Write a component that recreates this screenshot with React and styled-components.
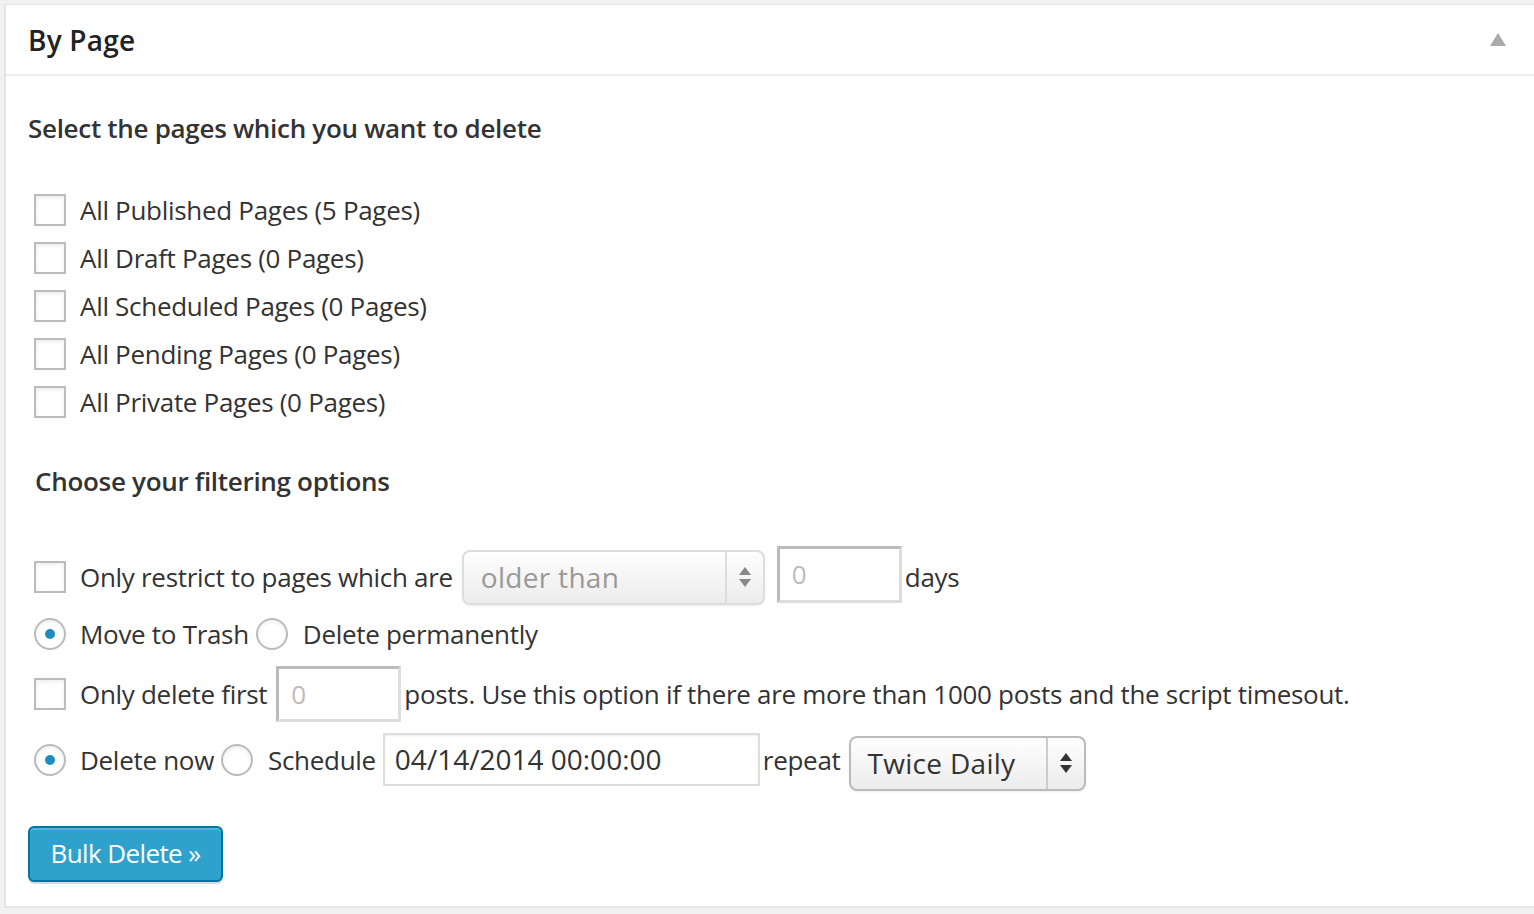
import React from "react";
import styled, { createGlobalStyle } from "styled-components";

const GlobalStyle = createGlobalStyle`
  html, body {
    margin: 0;
    padding: 0;
    background: #f1f1f1;
    font-family: "Open Sans", "Noto Sans", sans-serif;
    color: #444;
  }
  body {
    overflow: hidden;
  }
`;

const pageTypes = [
  "All Published Pages (5 Pages)",
  "All Draft Pages (0 Pages)",
  "All Scheduled Pages (0 Pages)",
  "All Pending Pages (0 Pages)",
  "All Private Pages (0 Pages)",
];

export default function App() {
  return (
    <>
      <GlobalStyle />
      <Panel>
        <PanelHeader>
          <Title>By Page</Title>
          <Toggle />
        </PanelHeader>
        <PanelBody>
          <Heading>Select the pages which you want to delete</Heading>
          <CheckList>
            {pageTypes.map((label) => (
              <CheckRow key={label}>
                <Checkbox />
                <Label>{label}</Label>
              </CheckRow>
            ))}
          </CheckList>

          <SubHeading>Choose your filtering options</SubHeading>

          <FilterRow $h={62}>
            <Checkbox />
            <Label>Only restrict to pages which are</Label>
            <Select $disabled $w={303} $hgt={55}>
              <span>older than</span>
              <Arrows $disabled />
            </Select>
            <NumberInput $w={125} $hgt={57} $mt={-6} $ml={12}>
              0
            </NumberInput>
            <Label $tight>days</Label>
          </FilterRow>

          <FilterRow $h={52}>
            <Radio $checked />
            <Label>Move to Trash</Label>
            <Radio />
            <Label>Delete permanently</Label>
          </FilterRow>

          <FilterRow $h={68}>
            <Checkbox />
            <Label>Only delete first</Label>
            <NumberInput $w={125} $hgt={56} $ml={9}>
              0
            </NumberInput>
            <Label $tight>
              posts. Use this option if there are more than 1000 posts and the
              script timesout.
            </Label>
          </FilterRow>

          <FilterRow $h={64}>
            <Radio $checked />
            <Label>Delete now</Label>
            <Radio />
            <Label>Schedule</Label>
            <DateInput>04/14/2014 00:00:00</DateInput>
            <Label $tight>repeat</Label>
            <Select $w={237} $hgt={55} $mt={6} $ml={8}>
              <span>Twice Daily</span>
              <Arrows />
            </Select>
          </FilterRow>

          <Button>Bulk Delete »</Button>
        </PanelBody>
      </Panel>
    </>
  );
}

const Panel = styled.section`
  margin: 4px 0 0 4px;
  width: 1540px;
  height: 904px;
  box-sizing: border-box;
  background: #fff;
  border: 2px solid #e5e5e5;
  border-top-width: 1px;
`;

const PanelHeader = styled.header`
  height: 69px;
  display: flex;
  align-items: center;
  justify-content: space-between;
  padding: 0 36px 0 22px;
  border-bottom: 2px solid #eee;
`;

const Title = styled.h2`
  margin: 0;
  font-size: 28px;
  font-weight: 600;
  color: #222;
  letter-spacing: 0.2px;
`;

const Toggle = styled.span`
  width: 0;
  height: 0;
  border-left: 8px solid transparent;
  border-right: 8px solid transparent;
  border-bottom: 13px solid #aaa;
`;

const PanelBody = styled.div`
  padding: 32px 0 0 22px;
  display: flex;
  flex-direction: column;
  align-items: flex-start;
`;

const Heading = styled.h3`
  margin: 0;
  line-height: 40px;
  font-size: 26px;
  font-weight: 600;
  color: #333;
  letter-spacing: -0.3px;
`;

const SubHeading = styled(Heading)`
  margin: 35px 0 0 7px;
`;

const CheckList = styled.div`
  margin-top: 38px;
  display: flex;
  flex-direction: column;
`;

const CheckRow = styled.div`
  height: 48px;
  display: flex;
  align-items: center;
  padding-left: 6px;
`;

const FilterRow = styled.div`
  height: ${(p) => p.$h}px;
  display: flex;
  align-items: center;
  padding-left: 6px;
  ${SubHeading} + & {
    margin-top: 45px;
  }
`;

const Checkbox = styled.span`
  flex: none;
  width: 32px;
  height: 32px;
  box-sizing: border-box;
  border: 2px solid #bbb;
  background: #fff;
  box-shadow: inset 0 2px 4px rgba(0, 0, 0, 0.07);
  margin-right: 14px;
`;

const Radio = styled.span`
  flex: none;
  position: relative;
  width: 32px;
  height: 32px;
  box-sizing: border-box;
  border-radius: 50%;
  border: 2px solid #bbb;
  background: #fff;
  box-shadow: inset 0 2px 4px rgba(0, 0, 0, 0.07);
  margin-right: 14px;
  &::after {
    content: "";
    display: ${(p) => (p.$checked ? "block" : "none")};
    position: absolute;
    left: 9px;
    top: 9px;
    width: 10px;
    height: 10px;
    border-radius: 50%;
    background: #1e8cbe;
  }
  span + & {
    margin-left: 7px;
    margin-right: 15px;
  }
`;

const Label = styled.span`
  font-size: 26px;
  color: #333;
  white-space: nowrap;
  letter-spacing: -0.3px;
  margin-left: ${(p) => (p.$tight ? "3px" : "0")};
`;

const Select = styled.div`
  flex: none;
  position: relative;
  display: flex;
  align-items: center;
  box-sizing: border-box;
  width: ${(p) => p.$w}px;
  height: ${(p) => p.$hgt}px;
  margin: ${(p) => p.$mt || 0}px 0 0 ${(p) => p.$ml || 9}px;
  padding-left: 17px;
  border: 2px solid ${(p) => (p.$disabled ? "#ddd" : "#bbb")};
  border-radius: 8px;
  background: linear-gradient(#fefefe, #ececec);
  box-shadow: 0 1px 2px rgba(0, 0, 0, 0.08);
  font-size: 28px;
  color: ${(p) => (p.$disabled ? "#999" : "#333")};
  letter-spacing: 0.3px;
`;

const Arrows = styled.span`
  position: absolute;
  right: 0;
  top: 0;
  bottom: 0;
  width: 36px;
  border-left: 2px solid ${(p) => (p.$disabled ? "#ddd" : "#ccc")};
  &::before,
  &::after {
    content: "";
    position: absolute;
    left: 12px;
    border-left: 6px solid transparent;
    border-right: 6px solid transparent;
  }
  &::before {
    top: calc(50% - 10px);
    border-bottom: 8px solid ${(p) => (p.$disabled ? "#888" : "#333")};
  }
  &::after {
    top: calc(50% + 2px);
    border-top: 8px solid ${(p) => (p.$disabled ? "#888" : "#333")};
  }
`;

const NumberInput = styled.div`
  flex: none;
  box-sizing: border-box;
  width: ${(p) => p.$w}px;
  height: ${(p) => p.$hgt}px;
  margin: ${(p) => p.$mt || 0}px 0 0 ${(p) => p.$ml}px;
  padding-left: 12px;
  display: flex;
  align-items: center;
  border: 3px solid #ddd;
  border-top-color: #bbb;
  border-left-color: #bbb;
  background: #fff;
  font-size: 26px;
  color: #bbb;
`;

const DateInput = styled.div`
  flex: none;
  box-sizing: border-box;
  width: 377px;
  height: 53px;
  margin-left: 7px;
  margin-top: -2px;
  padding-left: 10px;
  display: flex;
  align-items: center;
  border: 2px solid #ddd;
  background: #fff;
  box-shadow: inset 0 1px 2px rgba(0, 0, 0, 0.07);
  font-size: 28px;
  color: #333;
`;

const Button = styled.button`
  margin-top: 34px;
  margin-left: 0;
  width: 195px;
  height: 56px;
  box-sizing: border-box;
  border: 2px solid #0074a2;
  border-radius: 6px;
  background: #2ea2cc;
  box-shadow: inset 0 2px 0 rgba(120, 200, 230, 0.5), 0 2px 0 rgba(0, 0, 0, 0.15);
  color: #fff;
  font-family: "Open Sans", "Noto Sans", sans-serif;
  font-size: 26px;
  letter-spacing: -0.6px;
  padding: 0 0 2px;
  cursor: pointer;
`;
